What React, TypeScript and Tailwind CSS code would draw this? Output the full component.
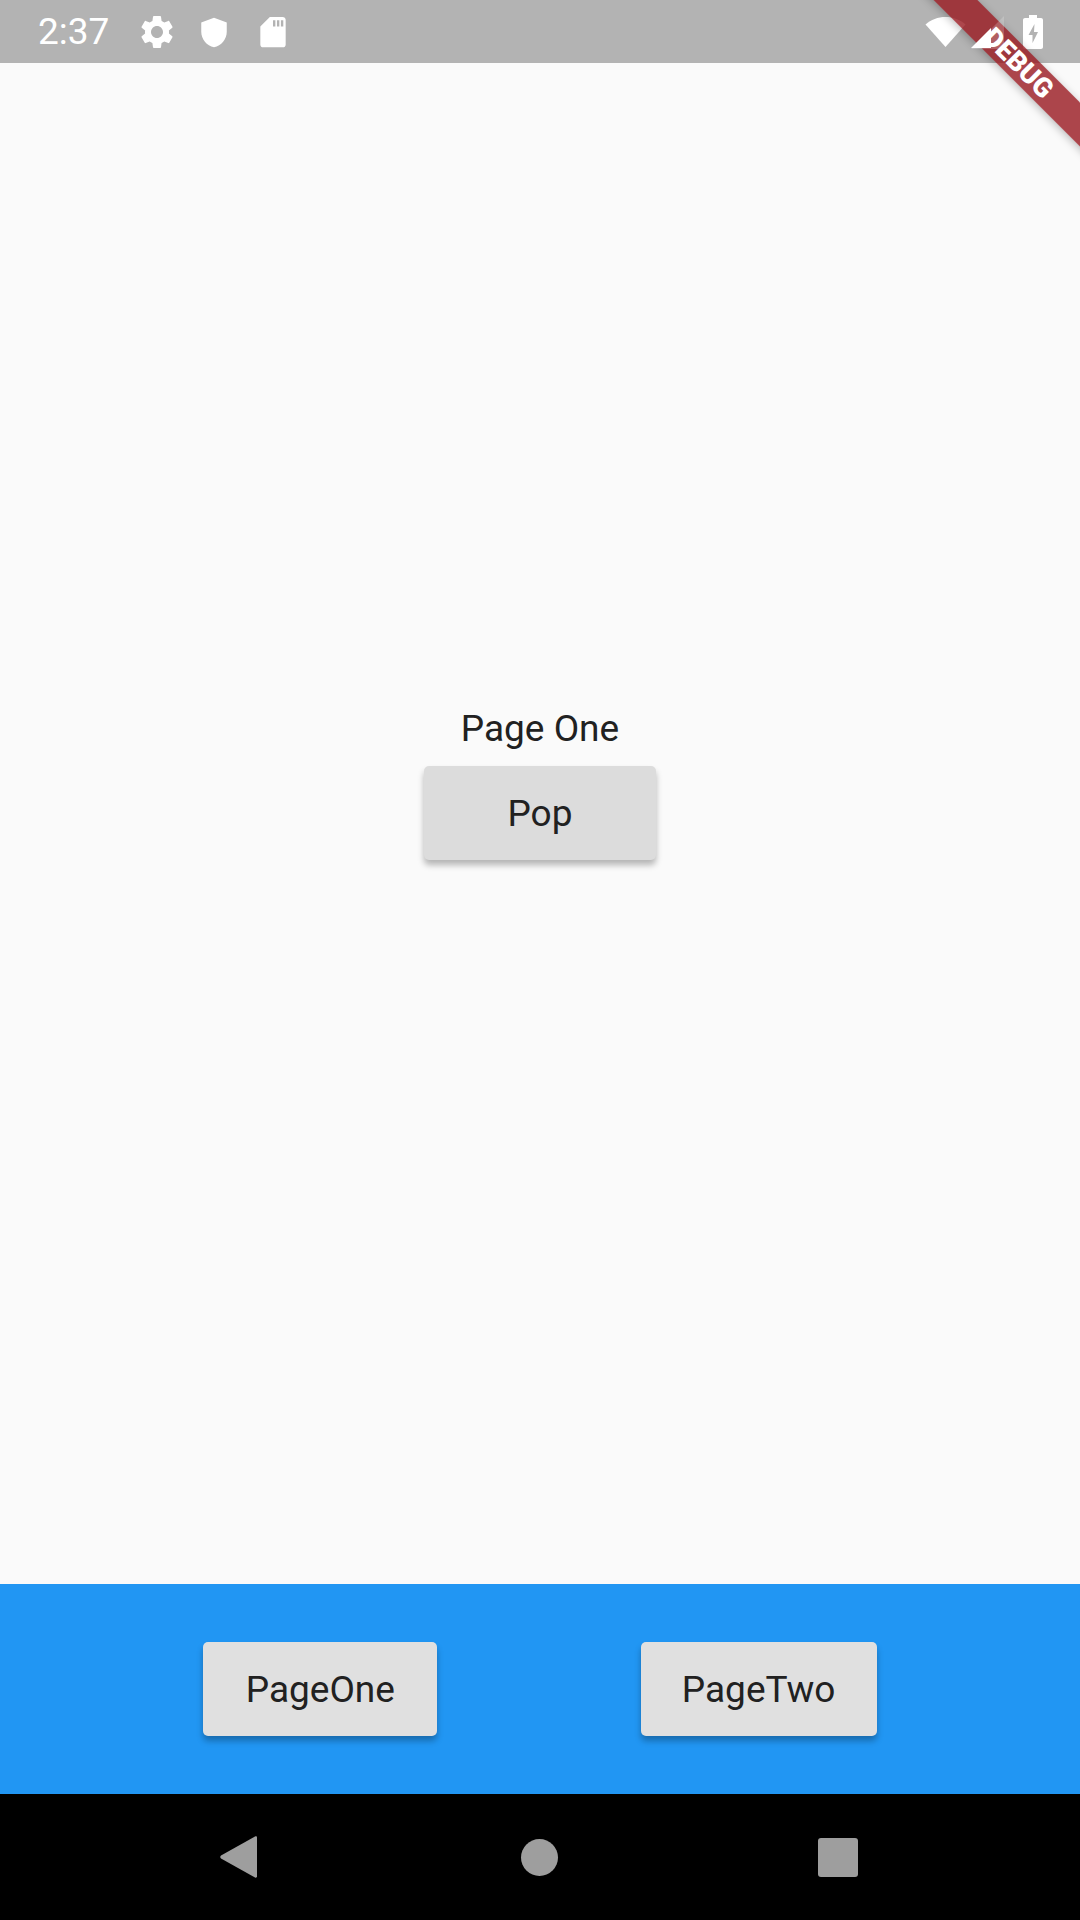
// App.tsx

import React from "react";

const PageButton = ({ label, className }: { label: string; className: string }) => (
  <button
    className={`${className} h-[94px] rounded-[5px] pt-[2px] text-[37px] text-[#212121] shadow-[0_5px_6px_rgba(0,0,0,0.28)]`}
  >
    {label}
  </button>
);

export default function App() {
  return (
    <div className="relative flex h-[1920px] w-[1080px] flex-col overflow-hidden bg-[#fafafa] font-['Roboto',sans-serif]">
      {/* Status bar */}
      <div className="flex h-[63px] shrink-0 items-center bg-[#b3b3b3] pl-[38px] pr-[37px] text-white">
        <span className="text-[37px] leading-none">2:37</span>
        <svg className="ml-[28px] h-[40px] w-[40px]" viewBox="0 0 24 24" fill="currentColor">
          <path d="M19.14 12.94c.04-.3.06-.61.06-.94 0-.32-.02-.64-.07-.94l2.03-1.58c.18-.14.23-.41.12-.61l-1.92-3.32c-.12-.22-.37-.29-.59-.22l-2.39.96c-.5-.38-1.03-.7-1.62-.94l-.36-2.54c-.04-.24-.24-.41-.48-.41h-3.84c-.24 0-.43.17-.47.41l-.36 2.54c-.59.24-1.13.57-1.62.94l-2.39-.96c-.22-.08-.47 0-.59.22L2.74 8.87c-.12.21-.08.47.12.61l2.03 1.58c-.05.3-.09.63-.09.94s.02.64.07.94l-2.03 1.58c-.18.14-.23.41-.12.61l1.92 3.32c.12.22.37.29.59.22l2.39-.96c.5.38 1.03.7 1.62.94l.36 2.54c.05.24.24.41.48.41h3.84c.24 0 .44-.17.47-.41l.36-2.54c.59-.24 1.13-.56 1.62-.94l2.39.96c.22.08.47 0 .59-.22l1.92-3.32c.12-.22.07-.47-.12-.61l-2.01-1.58zM12 15.6c-1.98 0-3.6-1.62-3.6-3.6s1.62-3.6 3.6-3.6 3.6 1.62 3.6 3.6-1.62 3.6-3.6 3.6z" />
        </svg>
        <svg className="ml-[19px] h-[36px] w-[36px]" viewBox="0 0 24 24" fill="currentColor">
          <path d="M12 2.500 3.500 5.600v6.200c0 5 3.600 9.300 8.500 10.400 4.900-1.100 8.500-5.400 8.500-10.400V5.600z" />
        </svg>
        <svg className="ml-[22px] h-[38px] w-[38px]" viewBox="0 0 24 24" fill="currentColor">
          <path
            fillRule="evenodd"
            d="M18 2.500h-8L4 8.500v11.500c0 1 .8 1.700 1.800 1.700h12.400c1 0 1.800-.7 1.800-1.700V4.300c0-1-.8-1.800-2-1.800zM12 4.500h1.500v4H12zM14.500 4.500H16v4h-1.500zM17 4.500h1.500v4H17z"
          />
        </svg>
        <div className="ml-auto flex items-center">
          <svg className="h-[31px] w-[41px]" viewBox="0 0 41 31" fill="currentColor">
            <path d="M0.500 8.500C6 3.500 13 1 20.500 1S35 3.500 40.500 8.500L20.500 31z" />
          </svg>
          {/* the lower part of the signal icon shows through the banner */}
          <svg className="relative z-10 ml-[5px] mt-[2px] h-[33px] w-[33px]" viewBox="0 0 33 33" fill="currentColor">
            <path d="M33 0v33H0z" opacity="0.2" />
            <path d="M0 32 20 12v20z" />
          </svg>
          <svg className="ml-[19px] h-[34px] w-[20px]" viewBox="0 0 20 34" fill="currentColor">
            <path
              fillRule="evenodd"
              d="M6 0h8v3h4c1.100 0 2 .9 2 2v27c0 1.100-.9 2-2 2H2c-1.100 0-2-.9-2-2V5c0-1.100.9-2 2-2h4zM11.500 9 5.500 20h4v8l5.500-11h-4z"
            />
          </svg>
        </div>
      </div>

      {/* Page content */}
      <div className="flex flex-1 flex-col items-center pt-[644px]">
        <span className="text-[37px] leading-[44px] text-[#212121]">Page One</span>
        <div className="mt-[15px]">
          <PageButton label="Pop" className="w-[232px] bg-[#dcdcdc]" />
        </div>
      </div>

      {/* Bottom bar */}
      <div className="flex h-[210px] shrink-0 items-center justify-evenly bg-[#2196f3]">
        <PageButton label="PageOne" className="w-[234px] bg-[#e0e0e0]" />
        <PageButton label="PageTwo" className="w-[236px] bg-[#e0e0e0]" />
      </div>

      {/* Android nav bar */}
      <div className="flex h-[126px] shrink-0 items-center bg-black pl-[220px]">
        <svg className="h-[42px] w-[37px]" viewBox="0 0 37 42" fill="#9e9e9e">
          <path d="M37 1.500v39c0 1-1 1.500-2 1L1 22.500c-1-.8-1-2.200 0-3L35 .5c1-.5 2-.2 2 1z" />
        </svg>
        <div className="ml-[264px] h-[37px] w-[37px] rounded-full bg-[#9e9e9e]" />
        <div className="ml-[260px] h-[39px] w-[40px] rounded-[3px] bg-[#9e9e9e]" />
      </div>

      {/* Debug banner */}
      <div className="absolute left-[872px] top-[49px] h-[31px] w-[296px] rotate-45 bg-[#98181f]/80 shadow-[0_2px_8px_rgba(0,0,0,0.25)]" />
      <div className="absolute left-[870px] top-[48px] z-20 flex h-[31px] w-[296px] rotate-45 items-center justify-center text-[27px] font-black leading-none text-white">
        DEBUG
      </div>
    </div>
  );
}
